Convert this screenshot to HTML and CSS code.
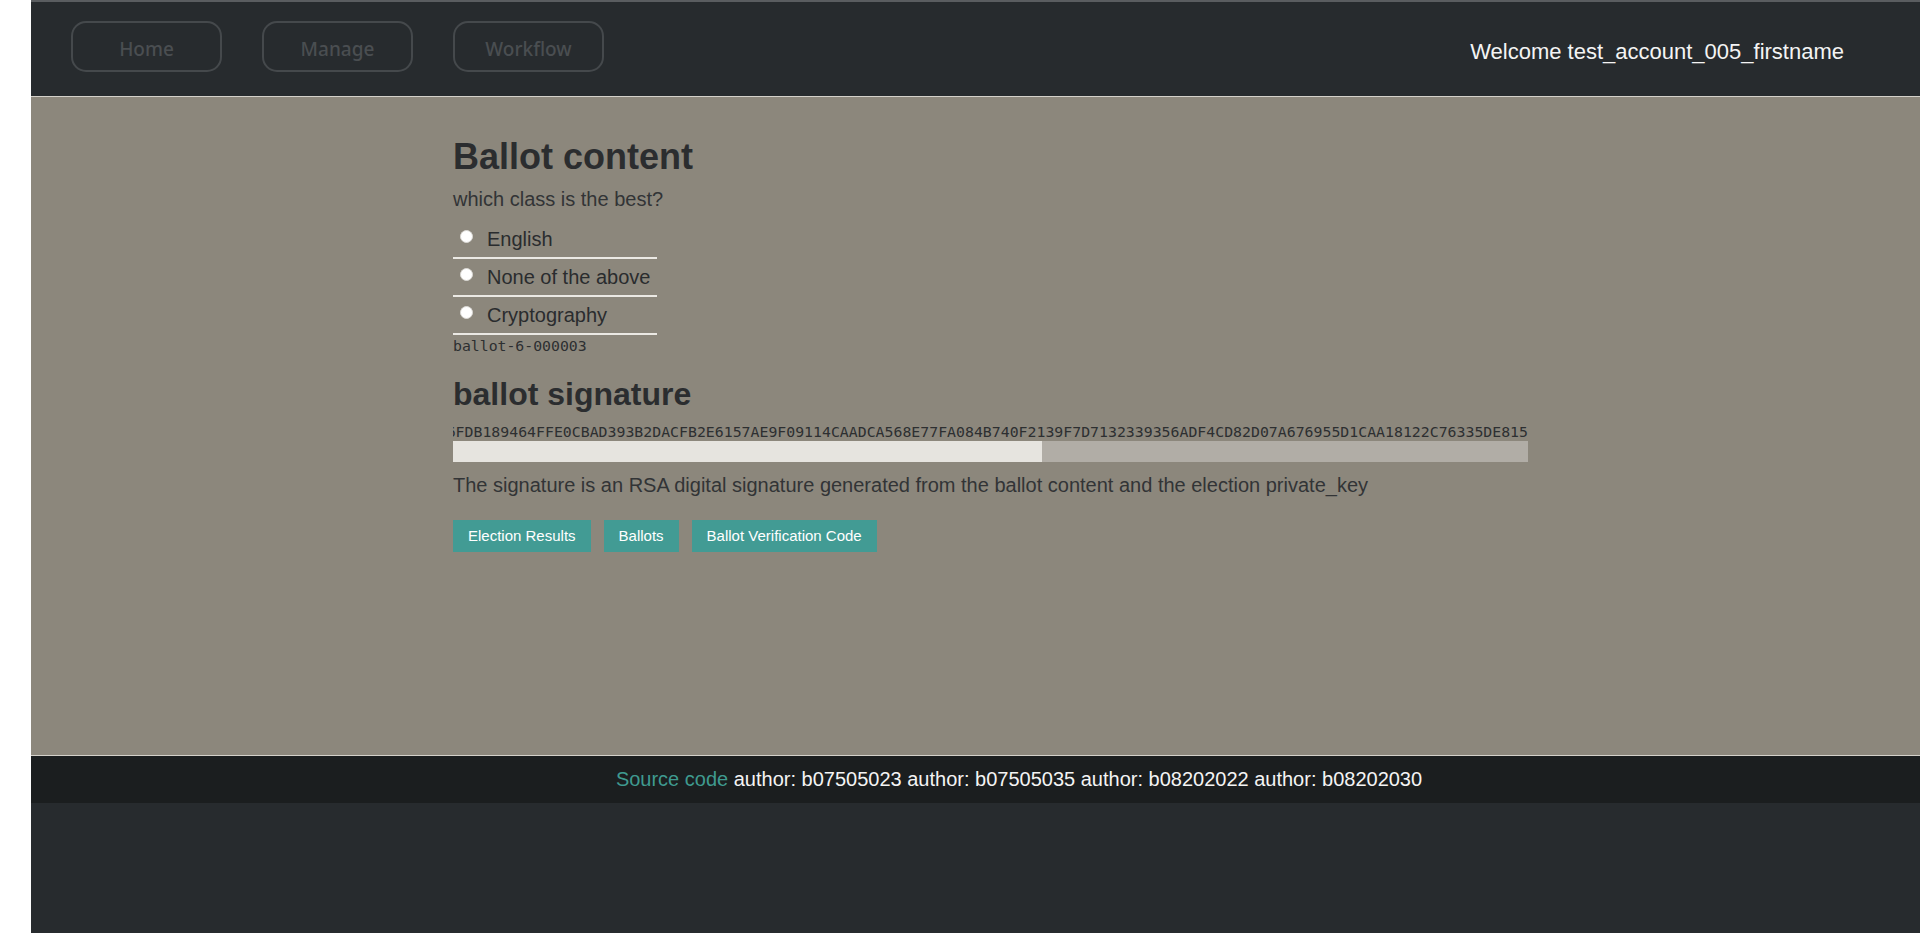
FILE: index.html
```html
<!DOCTYPE html>
<html lang="en">
<head>
<meta charset="utf-8">
<title>Ballot</title>
<link rel="stylesheet" href="styles.css">
</head>
<body>
<div class="page">
  <header class="topbar">
    <nav class="nav">
      <a class="nav-btn" href="#">Home</a>
      <a class="nav-btn" href="#">Manage</a>
      <a class="nav-btn" href="#">Workflow</a>
    </nav>
    <div class="welcome">Welcome test_account_005_firstname</div>
  </header>
  <main class="main">
    <section class="content">
      <h1 class="title">Ballot content</h1>
      <p class="question">which class is the best?</p>
      <ul class="options">
        <li class="option"><span class="radio"></span><span class="opt-label">English</span></li>
        <li class="option"><span class="radio"></span><span class="opt-label">None of the above</span></li>
        <li class="option"><span class="radio"></span><span class="opt-label">Cryptography</span></li>
      </ul>
      <div class="ballot-id">ballot-6-000003</div>
      <h2 class="subtitle">ballot signature</h2>
      <div class="sig-scroll"><span class="sig-text">6FDB189464FFE0CBAD393B2DACFB2E6157AE9F09114CAADCA568E77FA084B740F2139F7D7132339356ADF4CD82D07A676955D1CAA18122C76335DE815</span></div>
      <div class="bar"><div class="bar-fill" style="width: 589px"></div></div>
      <p class="desc">The signature is an RSA digital signature generated from the ballot content and the election private_key</p>
      <div class="actions">
        <a class="btn" href="#">Election Results</a>
        <a class="btn" href="#">Ballots</a>
        <a class="btn" href="#">Ballot Verification Code</a>
      </div>
    </section>
  </main>
  <footer class="footer">
    <a class="src" href="#">Source code</a>&nbsp;author: b07505023 author: b07505035 author: b08202022 author: b08202030
  </footer>
</div>
</body>
</html>
```
FILE: styles.css
```css
html, body {
  margin: 0;
  padding: 0;
  background: #ffffff;
}
body {
  font-family: "Liberation Sans", Arial, sans-serif;
}
.page {
  margin-left: 31px;
  height: 933px;
  background: #272b2e;
  display: flex;
  flex-direction: column;
}
.topbar {
  box-sizing: border-box;
  height: 97px;
  border-top: 2px solid #5a5d60;
  border-bottom: 1px solid #d4d1ca;
  background: #272b2e;
  display: flex;
  justify-content: space-between;
  align-items: flex-start;
  padding: 0 76px 0 40px;
}
.nav {
  display: flex;
  gap: 40px;
  padding-top: 19px;
}
.nav-btn {
  box-sizing: border-box;
  width: 151px;
  height: 51px;
  padding-top: 4px;
  border: 2px solid #45494c;
  border-radius: 15px;
  display: flex;
  align-items: center;
  justify-content: center;
  color: #4a4e51;
  font-family: "Noto Sans", "Open Sans", sans-serif;
  font-weight: 500;
  font-size: 19px;
  text-decoration: none;
}
.welcome {
  padding-top: 37px;
  color: #f4f4f4;
  font-size: 22px;
  line-height: 26px;
}
.main {
  height: 658px;
  background: #8c877c;
  flex-shrink: 0;
}
.content {
  padding: 40px 0 0 422px;
  width: 1075px;
  color: #2f3133;
}
.title {
  margin: 0;
  font-size: 36px;
  line-height: 40px;
  font-weight: bold;
  color: #2b2d2f;
}
.question {
  margin: 10px 0 0;
  font-size: 20px;
  line-height: 24px;
  color: #323436;
}
.options {
  list-style: none;
  margin: 10px 0 0;
  padding: 0;
  width: 204px;
}
.option {
  height: 36px;
  border-bottom: 2px solid #ebe9e4;
  display: flex;
  align-items: flex-start;
}
.radio {
  box-sizing: border-box;
  width: 13px;
  height: 13px;
  margin: 9px 0 0 7px;
  border-radius: 50%;
  background: #ffffff;
  border: 1px solid #dcdad6;
  flex-shrink: 0;
}
.opt-label {
  margin-left: 14px;
  font-size: 20px;
  line-height: 36px;
  color: #2a2c2e;
}
.ballot-id {
  margin-top: 1px;
  font-family: "DejaVu Sans Mono", "Liberation Mono", monospace;
  font-size: 14.8px;
  line-height: 20px;
  color: #2d2f31;
}
.subtitle {
  margin: 20px 0 0;
  font-size: 32px;
  line-height: 36px;
  font-weight: bold;
  color: #2b2d2f;
}
.sig-scroll {
  margin-top: 12px;
  width: 1075px;
  height: 17px;
  overflow: hidden;
  display: flex;
  justify-content: flex-end;
}
.sig-text {
  flex-shrink: 0;
  white-space: nowrap;
  font-family: "DejaVu Sans Mono", "Liberation Mono", monospace;
  font-size: 14.85px;
  line-height: 17px;
  color: #2d2f31;
}
.bar {
  width: 1075px;
  height: 21px;
  background: #b1ada6;
}
.bar-fill {
  height: 100%;
  background: #e6e4df;
}
.desc {
  margin: 11px 0 0;
  font-size: 20px;
  line-height: 24px;
  color: #323436;
}
.actions {
  margin-top: 23px;
  display: flex;
  gap: 13px;
}
.btn {
  height: 32px;
  line-height: 32px;
  padding: 0 15px;
  background: #429b94;
  color: #ffffff;
  font-size: 15px;
  text-decoration: none;
}
.footer {
  flex-shrink: 0;
  height: 47px;
  border-top: 1px solid #d4d1ca;
  background: #1b1e1f;
  color: #f4f4f4;
  font-size: 20px;
  line-height: 47px;
  text-align: center;
  padding-left: 87px;
}
.src {
  color: #3f9a8f;
  text-decoration: none;
}
```
